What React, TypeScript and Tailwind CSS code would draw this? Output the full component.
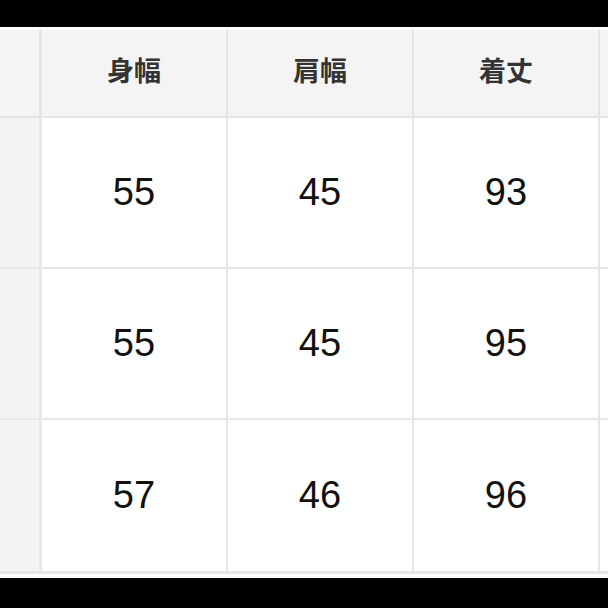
const headers = ["身幅", "肩幅", "着丈"];
const rows = [
  [55, 45, 93],
  [55, 45, 95],
  [57, 46, 96],
];

export default function App() {
  return (
    <div className="flex h-[608px] w-[608px] flex-col overflow-hidden bg-black">
      <div className="h-[27px] shrink-0" />
      <div className="shrink-0 bg-white pt-[3px] pb-[4px]">
        <div className="grid grid-cols-[42px_186px_186px_186px_8px] grid-rows-[88px_151px_151px_151px] border-b-[3px] border-[#e6e6e6]">
          <div className="border-r-[3px] border-b-2 border-[#e4e4e4] bg-[#f4f4f4]" />
          {headers.map((h) => (
            <div
              key={h}
              className="flex items-center justify-center border-r-2 border-b-2 border-[#e4e4e4] bg-[#f4f4f4] pb-[6px] font-['Noto_Sans_CJK_JP',sans-serif] text-[27px] font-bold text-[#333]"
            >
              {h}
            </div>
          ))}
          <div className="border-b-2 border-[#e4e4e4] bg-[#f4f4f4]" />
          {rows.map((r, i) => (
            <Row key={i} values={r} last={i === rows.length - 1} />
          ))}
        </div>
      </div>
    </div>
  );
}

function Row({ values, last }: { values: number[]; last: boolean }) {
  const b = last ? "" : "border-b-2";
  return (
    <>
      <div className={`border-r-[3px] ${b} border-[#e8e8e8] bg-[#f3f3f3]`} />
      {values.map((v, j) => (
        <div
          key={j}
          className={`flex items-center justify-center border-r-2 ${b} border-[#e6e6e6] bg-white font-['Liberation_Sans',Arial,sans-serif] text-[38px] text-[#111]`}
        >
          {v}
        </div>
      ))}
      <div className={`${b} border-[#e6e6e6] bg-white`} />
    </>
  );
}
